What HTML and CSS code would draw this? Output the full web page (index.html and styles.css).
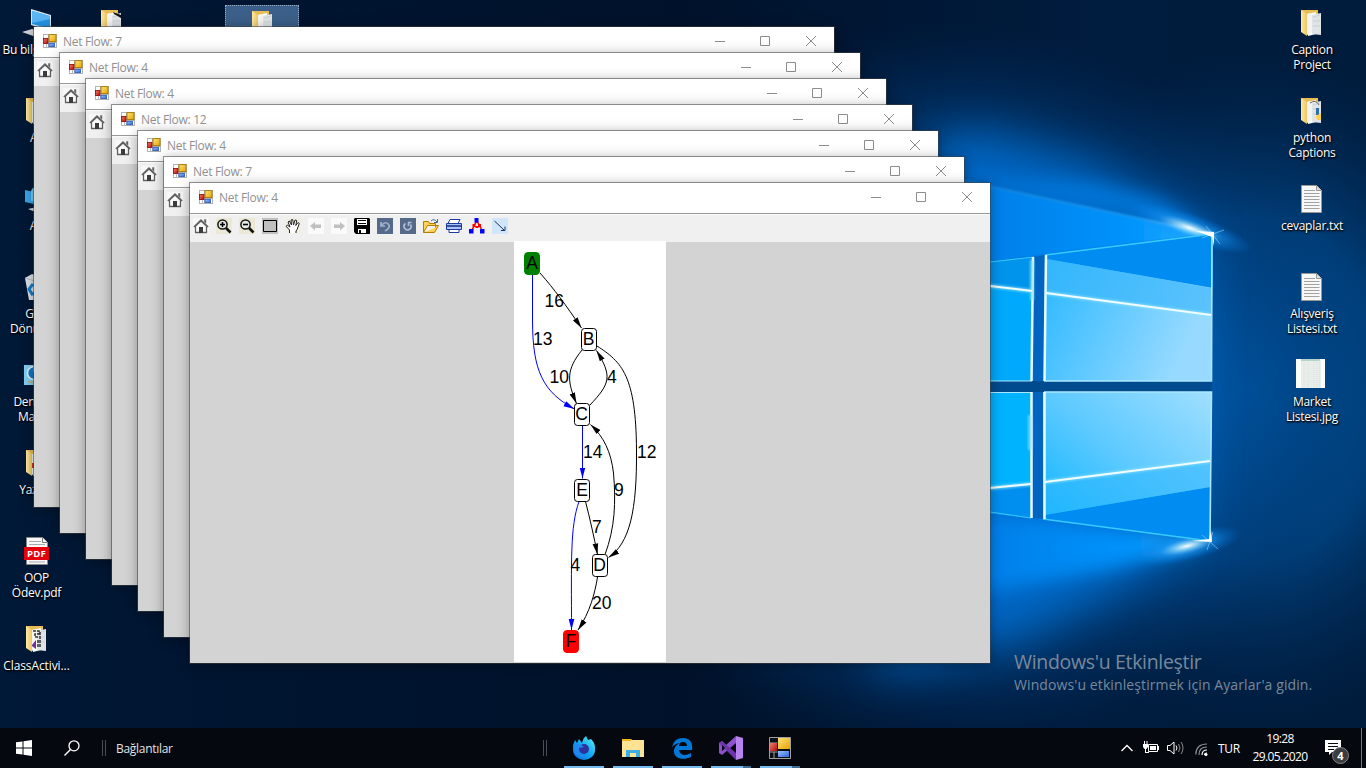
FILE: index.html
```html
<!DOCTYPE html>
<html lang="tr">
<head>
<meta charset="utf-8">
<title>Net Flow</title>
<link rel="stylesheet" href="styles.css">
</head>
<body>
<svg class="defs" width="0" height="0" aria-hidden="true">
  <defs>
    <linearGradient id="gold" x1="0" y1="0" x2="1" y2="1"><stop offset="0" stop-color="#ffe27a"/><stop offset="1" stop-color="#e5a500"/></linearGradient>
    <linearGradient id="redg" x1="0" y1="0" x2="1" y2="1"><stop offset="0" stop-color="#f08070"/><stop offset="1" stop-color="#b80808"/></linearGradient>
    <linearGradient id="blueg" x1="0" y1="0" x2="1" y2="1"><stop offset="0" stop-color="#9cc2ff"/><stop offset="1" stop-color="#2f66d8"/></linearGradient>
    <linearGradient id="fold" x1="0" y1="0" x2="1" y2="0"><stop offset="0" stop-color="#ffe9a3"/><stop offset="1" stop-color="#edc763"/></linearGradient>
    <symbol id="form" viewBox="0 0 14 14">
      <rect width="14" height="14" fill="#b4b4b4"/><rect x="1" y="1" width="4" height="3" fill="#fff"/><rect x="1" y="10" width="4" height="3" fill="#fff"/><rect x="3" y="10" width="1" height="3" fill="#bbb"/><rect x="12" y="9" width="1" height="4" fill="#fff"/>
      <rect x=".5" y="4.5" width="4.5" height="5" fill="url(#redg)" stroke="#980808" stroke-width=".8"/>
      <rect x="6" y=".6" width="7" height="7" fill="url(#gold)" stroke="#a87800" stroke-width=".9"/>
      <rect x="6" y="9.3" width="5.5" height="3.4" fill="url(#blueg)" stroke="#2b5fc4" stroke-width=".8"/>
    </symbol>
    <symbol id="form-dark" viewBox="0 0 22 22">
      <path d="M.5.500h21v21H.5zM.5 6h8M.5 15h8M5 15v6" fill="#0c1014" stroke="#a0a0a0"/>
      <path d="M1 6h7v8H1z" fill="url(#redg)"/><path d="M9 1h12v11H9z" fill="url(#gold)"/><path d="M9 14h11v6H9z" fill="url(#blueg)"/>
    </symbol>
    <symbol id="home" viewBox="0 0 16 16">
      <rect width="16" height="16" fill="#f7f7f7"/>
      <path d="M2.500 8v6.500h11V8L8 3z" fill="#fafafa" stroke="#606060" stroke-width="1.300"/>
      <path d="M.8 9 8 2l7.200 7" fill="none" stroke="#606060" stroke-width="1.300"/><path d="M11.200 1.300h2v4.500l-2-2z" fill="#666"/><path d="M6 15V9h4v6z" fill="#3c3c3c"/>
    </symbol>
    <symbol id="caption" viewBox="0 0 104 12">
      <g fill="none" stroke="#8d8d8d"><path d="M0 6.500h10M45.500 1.500h9v9h-9zM91 1l10 10M101 1 91 11"/></g>
    </symbol>
    <symbol id="folder" viewBox="0 0 21 28">
      <path d="M0 1h17v22H0z" fill="#e8bd55"/><path d="M6 5l9-2v22l-8 2z" fill="#fff"/><path d="M10 6l10-2v22l-9-1z" fill="#e1e4e6"/><path d="M12 8l7-2M12 12h7M12 17h7" stroke="#bfcaca" stroke-width=".7"/><path d="M0 1l6 4v22l-6-4z" fill="url(#fold)"/><path d="M6 5l5-1v19l-5 3z" fill="#f4f4f2"/>
    </symbol>
    <symbol id="txt" viewBox="0 0 21 28">
      <path d="M.5.5h15l5 5v22H.5z" fill="#f8f8f8" stroke="#9a9690"/><path d="M15.500.5v5h5" fill="#ddd" stroke="#9a9690"/><path d="M3 5.500h11M3 8.500h15.500M3 11.500h15.500M3 14.500h15.500M3 17.500h15.500M3 20.500h15.500M3 23.500h15.500" stroke="#a2a2a2"/>
    </symbol>
    <symbol id="pc" viewBox="0 0 30 28">
      <path d="M9 0l20 6v16L9 16z" fill="#d6e7ef"/><path d="M10 2l18 5v13l-18-5z" fill="#2796e6"/><path d="M10 2l18 5v3L10 14z" fill="#5bb6f4"/><path d="M0 23l10-3 15 4-11 4z" fill="#cfd5d8"/>
    </symbol>
  </defs>
</svg>

<main class="desktop">
  <svg class="wallpaper" viewBox="0 0 1366 768" preserveAspectRatio="none" aria-hidden="true">
    <defs>
      <radialGradient id="glow">
        <stop offset="0" stop-color="#0080e4"/><stop offset=".45" stop-color="#0070d0" stop-opacity=".95"/><stop offset=".65" stop-color="#0058a8" stop-opacity=".75"/><stop offset=".85" stop-color="#003f80" stop-opacity=".35"/><stop offset="1" stop-color="#002a58" stop-opacity="0"/>
      </radialGradient>
      <radialGradient id="side"><stop offset="0" stop-color="#005099"/><stop offset=".5" stop-color="#004687" stop-opacity=".8"/><stop offset="1" stop-color="#002a58" stop-opacity="0"/></radialGradient>
      <radialGradient id="spark"><stop offset="0" stop-color="#fff"/><stop offset=".2" stop-color="#9de0ff" stop-opacity=".8"/><stop offset=".5" stop-color="#1a9cff" stop-opacity=".5"/><stop offset="1" stop-color="#0080f0" stop-opacity="0"/></radialGradient>
      <linearGradient id="base" x1="0" y1="0" x2="1" y2="0"><stop offset="0" stop-color="#001937"/><stop offset=".15" stop-color="#001531"/><stop offset=".5" stop-color="#00122b"/><stop offset=".8" stop-color="#001c3e"/><stop offset="1" stop-color="#001c3c"/></linearGradient>
      <linearGradient id="pt" x1="0" y1="0" x2="1" y2=".4"><stop offset="0" stop-color="#22b5ff"/><stop offset=".5" stop-color="#5dc8ff"/><stop offset="1" stop-color="#98daff"/></linearGradient>
      <linearGradient id="pb" x1="0" y1="1" x2="1" y2="0"><stop offset="0" stop-color="#00b3ff"/><stop offset=".5" stop-color="#5cc9ff"/><stop offset="1" stop-color="#a0dfff"/></linearGradient>
      <linearGradient id="beam" x1="0" y1="0" x2="1" y2="0"><stop offset="0" stop-color="#0072dc"/><stop offset=".75" stop-color="#0094fd"/><stop offset="1" stop-color="#35b8ff"/></linearGradient>
      <linearGradient id="edge" gradientUnits="userSpaceOnUse" x1="903" y1="0" x2="1213" y2="0"><stop offset="0" stop-color="#3bb6ff" stop-opacity=".2"/><stop offset=".75" stop-color="#3bb6ff" stop-opacity=".5"/><stop offset="1" stop-color="#fff"/></linearGradient>
      <filter id="b1" x="-20%" y="-20%" width="140%" height="140%"><feGaussianBlur stdDeviation="1.200"/></filter>
      <filter id="b3" x="-30%" y="-60%" width="160%" height="220%"><feGaussianBlur stdDeviation="9"/></filter>
      <filter id="b12" x="-40%" y="-40%" width="180%" height="180%"><feGaussianBlur stdDeviation="24"/></filter>
    </defs>
    <rect width="1366" height="768" fill="url(#base)"/>
    <ellipse cx="1250" cy="390" rx="280" ry="340" fill="url(#side)"/>
    <ellipse cx="950" cy="390" rx="400" ry="370" fill="url(#glow)" opacity=".75"/>
    <path d="M880 180L970 130 1090 165 1200 234 1190 541 1130 580 1020 640 880 670z" fill="#0070d4" opacity=".8" filter="url(#b12)"/>
    <path d="M960 180L1090 185 1160 200 1213 234 1100 204z" fill="#0084ec" opacity=".75" filter="url(#b3)"/>
    <path d="M900 168L1213 234 1050 254 900 276z" fill="url(#beam)" filter="url(#b1)"/>
    <path d="M900 505L1043 520 1210 541 1110 568 940 600z" fill="url(#beam)" filter="url(#b3)"/>
    <path d="M903 168L1213 234" stroke="url(#edge)" stroke-width="2" filter="url(#b1)"/>
    <ellipse cx="1190" cy="228" rx="66" ry="15" transform="rotate(19 1190 228)" fill="url(#spark)"/>
    <ellipse cx="1187" cy="546" rx="56" ry="15" transform="rotate(-14 1187 546)" fill="url(#spark)"/>
    <path d="M1034 257l11-2v264l-12-1z" fill="#0064c0"/>
    <path d="M960 381h252v11H960z" fill="#004b8d"/>
    <path d="M900 274L1034 257 1032 381H900z" fill="#00a9fb"/><path d="M900 270L1034 257V291L900 274z" fill="#0094ec"/>
    <path d="M900 392H1031V518L900 503z" fill="#00b3ff"/><path d="M900 497L1031 484V518L900 503z" fill="#008fef"/>
    <path d="M1045 255L1213 234 1211 381H1044z" fill="url(#pt)"/>
    <path d="M1045 255L1213 234V288L1047 259z" fill="#008cf0"/><path d="M1047 259L1211 288V315L1046 293z" fill="#39b6fa" opacity=".65"/>
    <path d="M1043 392H1212L1210 541 1043 519z" fill="url(#pb)"/>
    <path d="M1045 515L1210 487V541L1043 519z" fill="#008cf0"/><path d="M1045 482L1210 461V487L1045 515z" fill="#2db7fd" opacity=".55"/>
    <g fill="none" stroke="#a9e8ff"><path d="M1045 255L1213 234M1043 519L1210 541" stroke="#38caff" stroke-width="1.500"/><path d="M990 262L1034 257M990 512L1031 518" stroke="#38caff"/><path d="M1212 236L1211.500 381H1044M1044 392H1211.500L1210 541" stroke-width="1.600"/><path d="M990 381H1032M990 392.500H1031"/></g>
    <g fill="none" stroke="#e9fbff" stroke-width="2.500"><path d="M1046 255L1044.500 381M1044.500 392V519"/><path d="M1033 257L1031.500 381M1031.500 392V518"/></g>
    <g fill="none" stroke="#8de2ff" stroke-width="4" filter="url(#b1)" opacity=".7"><path d="M1046 293L1211 315M1045 482L1210 461M990 286L1032 291M990 488L1031 484M1032 260V300M1030 415V450"/></g>
    <g fill="none" stroke="#f0fcff" stroke-width="2"><path d="M1046 293L1211 315M1045 482L1210 461M990 286L1032 291M990 488L1031 484"/></g>
    <g stroke="#9bdcff" stroke-width=".8" opacity=".7"><path d="M1206 226l14 18M1224 230l-22 8M1202 535l16 14M1213 532l-6 18"/></g>
    <path d="M1196 231l18 1v14l-2-9z" fill="#fff"/><path d="M1192 541l20 1-1-12-2 9z" fill="#fff"/>
  </svg>

  <section class="icons icons-left">
    <div class="item"><svg class="pic" width="30" height="28"><use href="#pc"/></svg><span>Bu bilgisayar</span></div>
    <div class="item"><svg class="pic" width="21" height="28"><use href="#folder"/></svg><span>Ali</span></div>
    <div class="item"><svg class="pic" width="24" height="28" viewBox="0 0 24 28"><path d="M0 5l22 5v12L0 17z" fill="#38a4e8"/><path d="M6 7a5 5 0 0 1 10 0v9H6z" fill="#77c8e9"/><path d="M3 24l9-2 9 3-8 3z" fill="#d6dde0"/></svg><span>Ağ</span></div>
    <div class="item"><svg class="pic" width="24" height="28" viewBox="0 0 24 28"><path d="M0 5l7-4 5 2 6-2 6 4-3 22H4z" fill="#dce3e8"/><path d="M0 5l10 3 14-3" stroke="#aeb9c0" fill="none"/><path d="M8 11l-4 5 3 5 6-1M9 12l4-1" stroke="#187dca" stroke-width="3" fill="none"/></svg><span>Geri<br>Dönüşüm</span></div>
    <div class="item"><svg class="pic" width="25" height="28" viewBox="0 0 25 28"><path d="M0 4h25v20H0z" fill="#80cdf3"/><circle cx="10" cy="12" r="6.500" fill="#1278c6" stroke="#dff3ff" stroke-width="1.500"/><path d="M9 4v7h7" fill="#f2a824"/><path d="M4 21h16" stroke="#e8a426"/></svg><span>Denetim<br>Masası</span></div>
    <div class="item"><svg class="pic" width="21" height="28"><use href="#folder"/><path d="M6 14h4v5H6z" fill="#cc342a"/></svg><span>Yazlab</span></div>
    <div class="item"><svg class="pic" width="25" height="28" viewBox="0 0 25 28"><path d="M2.500.5h16l5 5v22h-21z" fill="#f8f8f8" stroke="#858585"/><path d="M18.500.5v5h5" fill="#fff" stroke="#777"/><path d="M5 4.500h12M5 7.500h16M5 25h16" stroke="#aaa"/><path d="M0 10h25v13H0z" fill="#e5000f"/><text x="12.500" y="20" class="pdf">PDF</text></svg><span>OOP<br>Ödev.pdf</span></div>
    <div class="item"><svg class="pic" width="21" height="28"><use href="#folder"/><path d="M7 6h6v3H9v3h4M12 15v7M14 7v15" fill="none" stroke="#333" stroke-width="1.500" stroke-dasharray="3 1"/><path d="M6 20l4-5v9l-4-3z" fill="#6931a5"/></svg><span class="wide">ClassActivi...</span></div>
  </section>
  <section class="icons icons-second"><div class="item"><svg class="pic" width="21" height="28"><use href="#folder"/><path d="M12 3l8 3v3l-7-4z" fill="#101010"/></svg></div></section>
  <section class="icons icons-selected"><div class="item"><svg class="pic" width="21" height="28"><use href="#folder"/></svg></div></section>
  <section class="icons icons-right">
    <div class="item"><svg class="pic" width="21" height="28"><use href="#folder"/></svg><span>Caption<br>Project</span></div>
    <div class="item"><svg class="pic" width="21" height="28"><use href="#folder"/><path d="M9 6q6-4 9 2" stroke="#666" fill="none"/><path d="M15 11h3v7h-3z" fill="#316fa7"/><path d="M15 19l5-3v7h-4z" fill="#ffd342"/></svg><span>python<br>Captions</span></div>
    <div class="item"><svg class="pic" width="21" height="28"><use href="#txt"/></svg><span>cevaplar.txt</span></div>
    <div class="item"><svg class="pic" width="21" height="28"><use href="#txt"/></svg><span>Alışveriş<br>Listesi.txt</span></div>
    <div class="item"><svg class="pic photo" width="29" height="29" viewBox="0 0 29 29"><path d="M0 0h29v29H0z" fill="#fcfcfc"/><path d="M5 0h19v29H5z" fill="#e9eeeb"/><path d="M5 1h19" stroke="#77bcae"/><path d="M8 3v26M12 3v26M18 3v26M21 3v26" stroke="#d5dfdb" stroke-dasharray="1 1"/><path d="M24 1v28" stroke="#c9e4de"/></svg><span>Market<br>Listesi.jpg</span></div>
  </section>

  <article class="window w1"><header class="titlebar"><svg width="14" height="14"><use href="#form"/></svg><h2>Net Flow: 7</h2><svg class="caption" width="104" height="12"><use href="#caption"/></svg></header><div class="tools"><svg width="16" height="16"><use href="#home"/></svg></div></article>
  <article class="window w2"><header class="titlebar"><svg width="14" height="14"><use href="#form"/></svg><h2>Net Flow: 4</h2><svg class="caption" width="104" height="12"><use href="#caption"/></svg></header><div class="tools"><svg width="16" height="16"><use href="#home"/></svg></div></article>
  <article class="window w3"><header class="titlebar"><svg width="14" height="14"><use href="#form"/></svg><h2>Net Flow: 4</h2><svg class="caption" width="104" height="12"><use href="#caption"/></svg></header><div class="tools"><svg width="16" height="16"><use href="#home"/></svg></div></article>
  <article class="window w4"><header class="titlebar"><svg width="14" height="14"><use href="#form"/></svg><h2>Net Flow: 12</h2><svg class="caption" width="104" height="12"><use href="#caption"/></svg></header><div class="tools"><svg width="16" height="16"><use href="#home"/></svg></div></article>
  <article class="window w5"><header class="titlebar"><svg width="14" height="14"><use href="#form"/></svg><h2>Net Flow: 4</h2><svg class="caption" width="104" height="12"><use href="#caption"/></svg></header><div class="tools"><svg width="16" height="16"><use href="#home"/></svg></div></article>
  <article class="window w6"><header class="titlebar"><svg width="14" height="14"><use href="#form"/></svg><h2>Net Flow: 7</h2><svg class="caption" width="104" height="12"><use href="#caption"/></svg></header><div class="tools"><svg width="16" height="16"><use href="#home"/></svg></div></article>
  <article class="window w7">
    <header class="titlebar"><svg width="14" height="14"><use href="#form"/></svg><h2>Net Flow: 4</h2><svg class="caption" width="104" height="12"><use href="#caption"/></svg></header>
    <div class="tools">
      <svg width="16" height="16"><use href="#home"/></svg>
      <svg width="16" height="16" viewBox="0 0 16 16"><path d="M0 0h16v16H0z" fill="#ebe8d6"/><circle cx="6.500" cy="6.500" r="4.600" fill="#e6ece8" stroke="#111" stroke-width="1.500"/><path d="M4 6.500h5M6.500 4v5" stroke="#000" stroke-width="1.600"/><path d="M10 10l4.500 4.500" stroke="#111" stroke-width="2.600"/></svg>
      <svg width="16" height="16" viewBox="0 0 16 16"><path d="M0 0h16v16H0z" fill="#ebe8d6"/><circle cx="6.500" cy="6.500" r="4.600" fill="#e6ece8" stroke="#111" stroke-width="1.500"/><path d="M4 6.500h5" stroke="#000" stroke-width="1.600"/><path d="M10 10l4.500 4.500" stroke="#111" stroke-width="2.600"/></svg>
      <svg width="16" height="16" viewBox="0 0 16 16"><path d="M0 0h16v16H0z" fill="#c0c0c0"/><path d="M1.500 2.500h13v11h-13z" fill="#c0c0c0" stroke="#000"/></svg>
      <svg width="16" height="16" viewBox="0 0 16 16"><path d="M0 0h16v16H0z" fill="#f2efe4"/><path d="M4.500 15v-3L1 8.200l1.500-1L5 9 3 4l1.300-1L6.500 7 6 2l1.700-.5L8.500 7 10 2l1.700.5L10.800 7.500 13 4.500l1.300 1-2.200 6L11 13v2" fill="#fff" stroke="#222"/></svg>
      <svg width="16" height="16" viewBox="0 0 16 16"><path d="M0 0h16v16H0z" fill="#fafafa"/><path d="M2 8l5-4v2.500h6v3.500H7V12.500z" fill="#c0c0c0"/></svg>
      <svg width="16" height="16" viewBox="0 0 16 16"><path d="M0 0h16v16H0z" fill="#fafafa"/><path d="M14 8L9 4v2.500H3v3.500h6V12.500z" fill="#c0c0c0"/></svg>
      <svg width="16" height="16" viewBox="0 0 16 16"><path d="M1 0h14l1 1v15H2l-2-2V1z"/><path d="M3 1h10v6H3z" fill="#fff"/><path d="M4 2.500h8M4 5.500h8" stroke="#000"/><path d="M4 11h8v4H4z" fill="#fff"/><path d="M5 12h2v3H5z"/></svg>
      <svg width="16" height="16" viewBox="0 0 16 16"><path d="M0 0h16v16H0z" fill="#55698a"/><path d="M4 4v4h4M4 8q5-6 8-1c1 3-2 5-4 6" fill="none" stroke="#9fb0cc" stroke-width="1.700"/></svg>
      <svg width="16" height="16" viewBox="0 0 16 16"><path d="M0 0h16v16H0z" fill="#55698a"/><path d="M5.500 5.500a3.500 3.500 0 1 0 5 1M8 4.500h3.500M8.500 4.500V8" fill="none" stroke="#b1bfd6" stroke-width="1.600"/></svg>
      <svg width="16" height="16" viewBox="0 0 16 16"><path d="M.5 14.500v-11h5l1 2h6v4M.5 14.500h11l4-7h-11z" fill="#ffd257" stroke="#b57c00"/><path d="M8 3q3-3 6 1M14.500 1v3.500H11" fill="none" stroke="#47699a"/></svg>
      <svg width="16" height="16" viewBox="0 0 16 16"><path d="M4 1.500h10l-2 4H2z" fill="#fff" stroke="#163fa1"/><path d="M.5 5.500h15v6H.5z" fill="#a9c5fa" stroke="#1c3b9e"/><path d="M1 8h14" stroke="#102c84" stroke-width="1.500"/><path d="M3 11.500h10v3H3z" fill="#fff" stroke="#1c3b9e"/></svg>
      <svg width="16" height="16" viewBox="0 0 16 16"><path d="M7.500 3L3 12M8 3l5 9" stroke="#f00" stroke-width="1.500" stroke-dasharray="4 1"/><path d="M5.500 0h4v4.500h-4zM0 11h4.500v4.500H0zM11 11h4.500v4.500H11z" fill="#00f"/><path d="M3.500 6h3v3h-3zM9 6h3v3H9zM6.500 8h3v2h-3z" fill="#f00"/></svg>
      <svg width="16" height="16" viewBox="0 0 16 16"><path d="M0 0h16v16H0z" fill="#d2e6fa"/><path d="M2.500 3L12 12M9 12.500h4V8.500" fill="none" stroke="#17365e"/></svg>
    </div>
    <div class="viewer">
      <svg class="graph" width="152" height="421" viewBox="514.500 241 152 421">
        <defs>
          <marker id="ak" viewBox="0 0 11 7" refX="11" refY="3.500" markerWidth="11" markerHeight="7" markerUnits="userSpaceOnUse" orient="auto"><path d="M0 .7L11 3.500 0 6.300z"/></marker>
          <marker id="ab" viewBox="0 0 11 7" refX="11" refY="3.500" markerWidth="11" markerHeight="7" markerUnits="userSpaceOnUse" orient="auto"><path d="M0 .7L11 3.500 0 6.300z" fill="#00f"/></marker>
        </defs>
        <g fill="none" stroke="#000">
          <path marker-end="url(#ak)" d="M540.500 273C555.500 290 565.500 304 582 328"/>
          <path marker-end="url(#ak)" d="M582.500 350C566.500 370 567.500 381 577 403.500"/>
          <path marker-end="url(#ak)" d="M590 405.500C611.500 383 612.500 376 597 350.500"/>
          <path marker-end="url(#ak)" d="M597.500 346C622.500 362 636.500 376 637 450C637.500 510 630.500 543 609 557.500"/>
          <path marker-end="url(#ak)" d="M605.500 554.500C615.500 528 616.500 502 614 473C611.500 452 604.500 437 591 424.500"/>
          <path marker-end="url(#ak)" d="M586 501.500C590.500 519 594.500 537 598 554.500"/>
          <path marker-end="url(#ak)" d="M598 577C595.500 593 590.500 612 578.500 630"/>
        </g>
        <g fill="none" stroke="#0000ff">
          <path marker-end="url(#ab)" d="M533 275V320C533 371 543.500 392 575 409"/>
          <path marker-end="url(#ab)" d="M583 426L583 478.500"/>
          <path marker-end="url(#ab)" d="M579.500 501.500C570.500 527 572 560 572 630"/>
        </g>
        <g fill="#fff" stroke="#000">
          <rect x="525" y="252.500" width="15" height="22" rx="3.500" fill="#008000" stroke="#008000"/>
          <rect x="582" y="328.500" width="15" height="22" rx="3"/><rect x="575" y="403.500" width="15" height="22" rx="3"/><rect x="575" y="479.500" width="15" height="22" rx="3"/><rect x="593" y="554.500" width="15" height="22" rx="3"/>
          <rect x="564" y="630.500" width="15" height="22" rx="3.500" fill="#f00" stroke="#f00"/>
        </g>
        <g class="nodes"><text x="532.500" y="269">A</text><text x="589" y="345">B</text><text x="582" y="420">C</text><text x="582.500" y="496">E</text><text x="600" y="571">D</text><text x="571.500" y="647">F</text></g>
        <g class="weights"><text x="545" y="307">16</text><text x="533.500" y="345">13</text><text x="550" y="383">10</text><text x="607.500" y="383">4</text><text x="583.500" y="458">14</text><text x="637.500" y="458">12</text><text x="614.500" y="496">9</text><text x="592.500" y="533">7</text><text x="571" y="571">4</text><text x="592.500" y="609">20</text></g>
      </svg>
    </div>
  </article>

  <aside class="activation"><strong>Windows'u Etkinleştir</strong><p>Windows'u etkinleştirmek için Ayarlar'a gidin.</p></aside>
</main>

<footer class="taskbar">
  <svg class="start" width="16" height="16" viewBox="0 0 16 16"><path d="M0 2.300L6.500 1.400V7.500H0zM7.500 1.200L16 0V7.500H7.500zM0 8.500H6.500V14.600L0 13.700zM7.500 8.500H16V16L7.500 14.800z" fill="#fff"/></svg>
  <svg class="search" width="16" height="16" viewBox="0 0 16 16"><circle cx="10" cy="5.800" r="5" fill="none" stroke="#fff" stroke-width="1.300"/><path d="M6.500 9.500L.5 15.500" stroke="#fff" stroke-width="1.400"/></svg>
  <i class="grip grip-a"></i><span class="links">Bağlantılar</span><i class="grip grip-b"></i>
  <nav class="apps">
    <div class="app"><svg width="24" height="24" viewBox="0 0 24 24"><defs><linearGradient id="ff" x1="1" y1="0" x2="0" y2="1"><stop offset="0" stop-color="#5ff6f0"/><stop offset=".5" stop-color="#12a5f5"/><stop offset="1" stop-color="#0862d8"/></linearGradient></defs><path d="M1 9l2-5 2 3 2-4 3 4q1-5 4-7l2 4 3-1q5 5 4 11a11 10 0 0 1-22 0z" fill="url(#ff)"/><circle cx="12" cy="13" r="5" fill="#2e329d"/><path d="M3 8q5-1 9 3l-5 1q-1 8 8 8-8 4-13-4z" fill="#2088ee"/></svg></div>
    <div class="app"><svg width="24" height="24" viewBox="0 0 24 24"><path d="M1 3h9l1 1h12v17H1z" fill="#ffe394"/><path d="M1 3h9v2H1z" fill="#f0b720"/><path d="M5 21v-7h14v7h-4v-4H9v4z" fill="#3baee5"/></svg></div>
    <div class="app"><svg width="24" height="24" viewBox="0 0 24 24"><path d="M2 11Q4 2 13 2c7 0 10 5 9 12H9c1 6 7 6 12 3v4C12 25 3 22 4 14Q5 9 10 7 6 7 2 11zM9 10h8q0-4-4-4t-4 4z" fill="#0078d7" fill-rule="evenodd"/></svg></div>
    <div class="app split"><svg width="24" height="24" viewBox="0 0 24 24"><path d="M0 7l3-2 4 4L17 0v7L3 19l-3-2zM3 9v6l3-3z" fill="#8d52cb" fill-rule="evenodd"/><path d="M17 0l7 2v20l-7 2z" fill="#b883ef"/><path d="M0 7l3-2 14 12v7z" fill="#6d35a9"/><path d="M3 9v6l3-3z" fill="#05090f"/></svg></div>
    <div class="app split"><svg width="22" height="22"><use href="#form-dark"/></svg></div>
  </nav>
  <div class="tray">
    <svg class="t-up" width="12" height="8" viewBox="0 0 12 8"><path d="M.5 7L6 1.500 11.500 7" fill="none" stroke="#fff" stroke-width="1.300"/></svg>
    <svg class="t-bat" width="16" height="14" viewBox="0 0 16 14"><path d="M5.500 3.500h9v7h-9z" fill="none" stroke="#fff"/><path d="M7 5h6v4H7zM15 5h1v4h-1zM0 3h5v3L3.500 8h-2L0 6zM1 0h1v3H1zM3.500 0h1v3h-1zM2 8h1v3h3v1H2z" fill="#fff"/></svg>
    <svg class="t-vol" width="17" height="14" viewBox="0 0 17 14"><path d="M.5 4.500H3L7 1v12L3 9.500H.5z" fill="none" stroke="#fff"/><path d="M9 4.500q2 2.500 0 5" fill="none" stroke="#fff"/><path d="M11.500 3q3 4 0 8M14 1q4 6 0 12" fill="none" stroke="#858b90"/></svg>
    <svg class="t-net" width="13" height="13" viewBox="0 0 13 13"><g fill="none" stroke="#8b9095" stroke-width="1.200"><path d="M.8 11.500Q1 1 12 1M4 12Q4 4 12 4"/><path d="M7 12q0-5 5-5M9.500 12q0-2 2.500-2" stroke="#fff"/></g><circle cx="11" cy="11.500" r="1.500" fill="#fff"/></svg>
    <span class="lang">TUR</span>
    <time><span>19:28</span><span>29.05.2020</span></time>
    <div class="notes"><svg width="16" height="15" viewBox="0 0 16 15"><path d="M0 0h16v12H7l-3 3v-3H0z" fill="#fff"/><path d="M3 3.500h10M3 6.500h10M3 9.500h6" stroke="#080c12"/></svg><b>4</b></div>
  </div>
</footer>
</body>
</html>
```

FILE: styles.css
```css
* { box-sizing: border-box; }
body { margin: 0; width: 1366px; height: 768px; overflow: hidden; display: flex; flex-direction: column; background: #00122b; font-family: "Open Sans", "Noto Sans", sans-serif; }
.defs { position: absolute; }
svg { display: block; flex: none; }

.desktop { position: relative; height: 728px; overflow: hidden; }
.wallpaper { position: absolute; left: 0; top: 0; width: 1366px; height: 768px; }

.icons { position: absolute; top: 9px; width: 76px; display: grid; grid-auto-rows: 88px; }
.item { display: flex; flex-direction: column; align-items: center; gap: 5px; color: #fff; font-size: 12px; line-height: 15px; letter-spacing: -.25px; text-align: center; text-shadow: 1px 1px 2px #000, 0 1px 2px #000; white-space: nowrap; }
.icons-left { left: -1.5px; }
.icons-second { left: 73px; }
.icons-selected { left: 225px; top: 5px; width: 74px; height: 80px; padding-top: 4px; background: rgba(90, 135, 185, .65); border: 1px dotted #99b1c9; }
.icons-right { left: 1274px; }
.icons-right .pic { margin-left: -1px; }
.icons-right .photo { margin: -2px 0 1px -3px; }
.wide { letter-spacing: -.1px; }
.pdf { font: bold 9.5px "Open Sans", sans-serif; fill: #fff; text-anchor: middle; text-shadow: none; letter-spacing: .3px; }

.window { position: absolute; width: 800px; height: 480px; display: flex; flex-direction: column; background: #d3d3d3; outline: 1px solid rgba(65, 65, 65, .55); box-shadow: 0 2px 12px rgba(0, 0, 0, .38); }
.w1 { left: 34px; top: 27px; }
.w2 { left: 60px; top: 53px; }
.w3 { left: 86px; top: 79px; }
.w4 { left: 112px; top: 105px; }
.w5 { left: 138px; top: 131px; }
.w6 { left: 164px; top: 157px; }
.w7 { left: 190px; top: 183px; }
.titlebar { height: 31px; flex: none; display: flex; align-items: center; padding: 0 15px 2px 9px; background: #fff; border-bottom: 1px solid #999; }
.titlebar h2 { margin: 1px 0 0 6px; font-size: 12px; line-height: 16px; font-weight: 400; letter-spacing: -.3px; color: #929292; }
.caption { margin-left: auto; }
.tools { height: 28px; flex: none; display: flex; align-items: flex-start; gap: 7px; padding: 3px 3px 0; background: #f0f0f0; border-top: 1px solid #fafafa; }
.viewer { flex: 1; min-height: 0; display: flex; padding-left: 324px; }
.graph { background: #fff; margin-top: -1px; }
.nodes, .weights { font: 17.5px "Liberation Sans", Arial, sans-serif; }
.nodes { text-anchor: middle; }

.activation { position: absolute; left: 1014px; top: 649px; color: #78899c; white-space: nowrap; }
.activation strong { display: block; font-size: 19.5px; line-height: 26px; font-weight: 400; letter-spacing: -.32px; }
.activation p { margin: 0; font-size: 14px; line-height: 20px; letter-spacing: .1px; }

.taskbar { height: 40px; display: flex; align-items: center; background: #05090f; color: #fff; font-size: 12px; }
.start { margin-left: 16px; }
.search { margin-left: 32px; }
.grip { width: 4px; height: 16px; border: solid #4b4e52; border-width: 0 1px; }
.grip-a { margin-left: 22px; }
.links { margin-left: 10px; width: 57px; letter-spacing: -.3px; white-space: nowrap; color: #e2e2e2; }
.grip-b { margin-left: 370px; }
.apps { margin-left: 17px; display: flex; gap: 9px; }
.app { width: 40px; height: 40px; display: flex; align-items: center; justify-content: center; border-bottom: 2px solid #76b9ed; padding-top: 2px; }
.split { border-image: linear-gradient(90deg, #76b9ed 0 31px, #426b90 31px) 1; border-style: solid; border-width: 0 0 2px; }
.tray { margin-left: auto; padding-right: 4px; display: flex; align-items: center; height: 40px; }
.t-bat { margin-left: 10px; }
.t-vol { margin-left: 8px; }
.t-net { margin-left: 11px; margin-top: 3px; }
.lang { margin-left: 10px; width: 22px; letter-spacing: -.3px; }
.tray time { margin-left: 10px; width: 60px; display: flex; flex-direction: column; align-items: center; line-height: 18px; letter-spacing: -.6px; }
.notes { position: relative; width: 42px; height: 40px; margin-left: 10px; padding: 12px 0 0 5px; border-right: 1px solid #777; }
.notes b { position: absolute; left: 12px; top: 19px; width: 17px; height: 17px; border: 1px solid #848484; border-radius: 50%; background: #3b3d40; font-size: 11px; line-height: 15px; text-align: center; }
```
